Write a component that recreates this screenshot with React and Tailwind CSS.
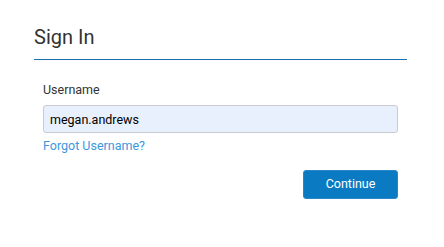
import React, { useState } from 'react';

export default function App() {
  const [username, setUsername] = useState('megan.andrews');

  return (
    <div className="min-h-screen bg-white font-['Roboto',sans-serif]">
      <div className="ml-[34px] w-[373px] pt-[23px]">
        <h1 className="border-b border-[#1670ad] pb-[8px] text-[20px] leading-[28px] font-normal text-[#333333]">
          Sign In
        </h1>

        <div className="px-[9px]">
          <label className="mt-[22px] block text-[12.5px] leading-[16px] text-[#333333]">
            Username
          </label>
          <input
            type="text"
            value={username}
            onChange={(e) => setUsername(e.target.value)}
            className="mt-[7px] block h-[28px] w-full rounded-[3px] border border-[#c9cbd0] bg-[#e8f0fe] pl-[6px] text-[12.5px] text-black outline-none"
          />
          <a href="#" className="mt-[5px] block w-fit text-[12.5px] leading-[16px] text-[#3d97dc]">
            Forgot Username?
          </a>

          <div className="mt-[16px] flex justify-end">
            <button className="h-[29px] w-[95px] rounded-[3px] border border-[#2a86c6] bg-[#0a7bc2] text-[12.5px] text-white">
              Continue
            </button>
          </div>
        </div>
      </div>
    </div>
  );
}
